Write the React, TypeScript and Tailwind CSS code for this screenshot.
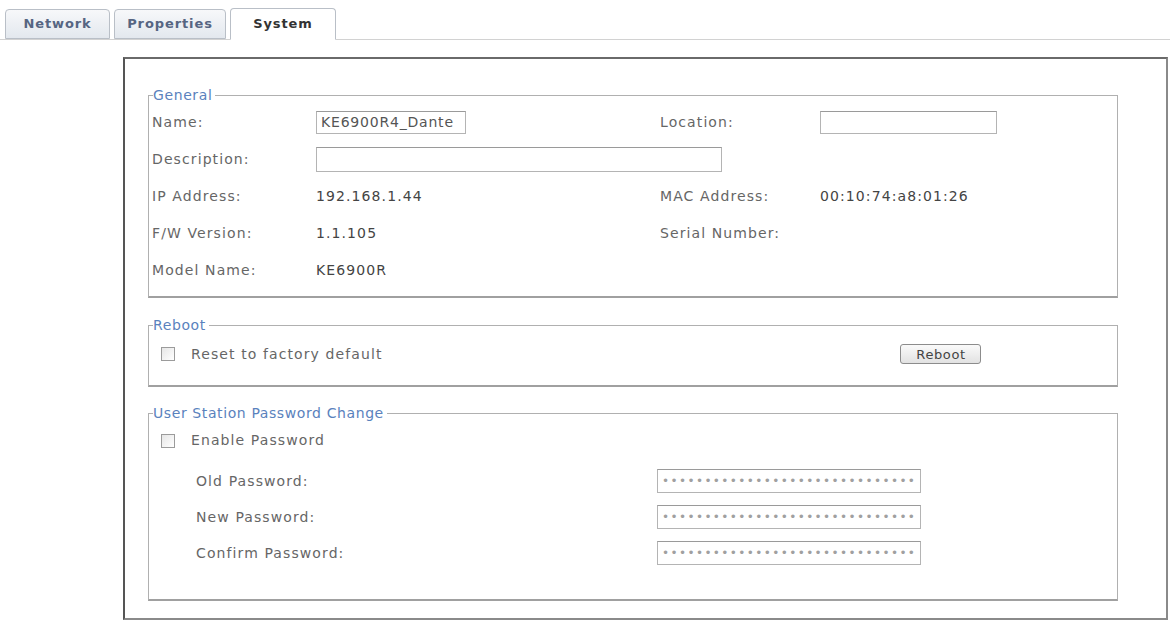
import React from 'react';

const font = { fontFamily: '"DejaVu Sans", Verdana, sans-serif' };

const Legend = ({ children }: { children: React.ReactNode }) => (
  <legend className="ml-[1px] pr-[3px] text-[14px] leading-[17px] tracking-[0.6px] text-[#5a82bd]">
    {children}
  </legend>
);

const TextBox = ({ value = '', className = '' }: { value?: string; className?: string }) => (
  <div
    className={`h-[23px] border border-[#b4b4b4] border-t-[#9a9a9a] bg-white px-[4px] text-[14px] leading-[21px] tracking-[0.8px] text-[#555] ${className}`}
  >
    {value}
  </div>
);

// masked value, 30 dots fit the box
const PasswordBox = () => (
  <div className="h-[24px] w-[264px] whitespace-nowrap border border-[#b4b4b4] border-t-[#9a9a9a] bg-white pl-[4px] text-[12px] leading-[22px] tracking-[1.4px] text-[#a0a0a0]">
    {'•'.repeat(30)}
  </div>
);

const Checkbox = () => (
  <span className="inline-block h-[14px] w-[14px] border border-[#9b9b9b] bg-gradient-to-br from-[#e6e6e6] to-white" />
);

const Tab = ({ label, active = false, width }: { label: string; active?: boolean; width: string }) => (
  <div
    className={`${width} flex items-center justify-center rounded-t-[4px] border border-[#b9bfc7] text-[13px] font-bold tracking-[0.9px] ${
      active
        ? '-mb-px h-[32px] border-b-white bg-white text-[#333]'
        : 'h-[30px] bg-gradient-to-b from-[#f7f8fa] to-[#e3e8ee] text-[#566582]'
    }`}
  >
    {label}
  </div>
);

export default function App() {
  const label = 'text-[14px] tracking-[1.1px] text-[#666]';
  const value = 'text-[14px] tracking-[1.1px] text-[#444]';

  return (
    <div className="h-[623px] w-[1170px] overflow-hidden bg-white" style={font}>
      {/* tab strip */}
      <div className="flex h-[40px] items-end gap-[4px] border-b border-[#d2d2d2] pl-[5px]">
        <Tab label="Network" width="w-[105px]" />
        <Tab label="Properties" width="w-[112px]" />
        <Tab label="System" active width="w-[106px]" />
      </div>

      {/* frame */}
      <div className="ml-[123px] mt-[17px] w-[1045px] border-2 border-[#8a8a8a] border-l-[#555] border-t-[#6a6a6a] pb-[17px] pl-[23px] pr-[48px] pt-[28px]">
        {/* General */}
        <fieldset className="border border-[#b0b0b0] border-b-2 border-b-[#a0a0a0] pb-[7px] pl-[3px]">
          <Legend>General</Legend>
          <div className="grid grid-cols-[164px_344px_160px_1fr]">
            <div className={`flex h-[37px] items-center ${label}`}>Name:</div>
            <div className="flex h-[37px] items-center">
              <TextBox value="KE6900R4_Dante" className="w-[150px]" />
            </div>
            <div className={`flex h-[37px] items-center ${label}`}>Location:</div>
            <div className="flex h-[37px] items-center">
              <TextBox className="w-[177px]" />
            </div>

            <div className={`flex h-[37px] items-center ${label}`}>Description:</div>
            <div className="col-span-3 flex h-[37px] items-center">
              <TextBox className="h-[25px] w-[406px]" />
            </div>

            <div className={`flex h-[37px] items-center ${label}`}>IP Address:</div>
            <div className={`flex h-[37px] items-center ${value}`}>192.168.1.44</div>
            <div className={`flex h-[37px] items-center ${label}`}>MAC Address:</div>
            <div className={`flex h-[37px] items-center ${value}`}>00:10:74:a8:01:26</div>

            <div className={`flex h-[37px] items-center ${label}`}>F/W Version:</div>
            <div className={`flex h-[37px] items-center ${value}`}>1.1.105</div>
            <div className={`flex h-[37px] items-center ${label}`}>Serial Number:</div>
            <div className="h-[37px]" />

            <div className={`flex h-[37px] items-center ${label}`}>Model Name:</div>
            <div className={`flex h-[37px] items-center ${value}`}>KE6900R</div>
            <div className="h-[37px]" />
            <div className="h-[37px]" />
          </div>
        </fieldset>

        {/* Reboot */}
        <fieldset className="mt-[19px] border border-[#b0b0b0] border-b-2 border-b-[#a0a0a0] pb-[11px] pl-[3px]">
          <Legend>Reboot</Legend>
          <div className="flex h-[40px] items-center">
            <div className="ml-[9px] flex items-center gap-[16px]">
              <Checkbox />
              <span className={label}>Reset to factory default</span>
            </div>
            <button className="ml-[518px] h-[20px] w-[81px] rounded-[3px] border border-[#8c8c8c] bg-gradient-to-b from-[#fafafa] to-[#e2e2e2] text-[13px] tracking-[0.6px] text-[#444]">
              Reboot
            </button>
          </div>
        </fieldset>

        {/* Password */}
        <fieldset className="mt-[18px] border border-[#b0b0b0] border-b-2 border-b-[#a0a0a0] pb-[28px] pl-[3px]">
          <Legend>User Station Password Change</Legend>
          <div className="flex h-[37px] items-center">
            <div className="ml-[9px] flex items-center gap-[16px]">
              <Checkbox />
              <span className={label}>Enable Password</span>
            </div>
          </div>
          <div className="mt-[4px] flex flex-col">
            {['Old Password:', 'New Password:', 'Confirm Password:'].map((l) => (
              <div key={l} className="flex h-[36px] items-center">
                <span className={`ml-[44px] w-[461px] ${label}`}>{l}</span>
                <PasswordBox />
              </div>
            ))}
          </div>
        </fieldset>
      </div>
    </div>
  );
}
